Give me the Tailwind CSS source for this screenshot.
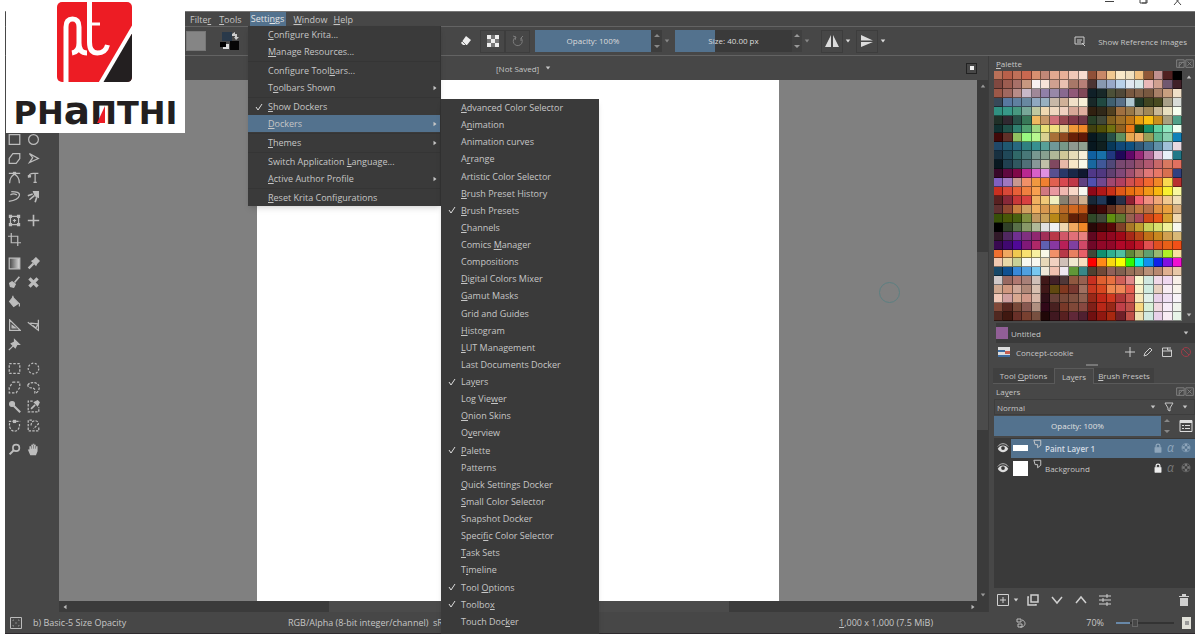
<!DOCTYPE html>
<html lang="en">
<head>
<meta charset="utf-8">
<title>Krita</title>
<script src="https://cdn.jsdelivr.net/npm/@tailwindcss/browser@4"></script>
</head>
<body class="relative flex h-screen flex-col overflow-hidden bg-white pr-[5px] pl-[5px] font-['Open_Sans','Noto_Sans',sans-serif] text-[9px] leading-[17px] text-[#c6c6c6]">

<svg class="absolute h-0 w-0">
  <defs><linearGradient id="lg"><stop stop-color="#444"/><stop offset="1" stop-color="#ddd"/></linearGradient></defs>
  <symbol id="rect" viewBox="0 0 16 16"><path d="M1.500 2h13v12h-13z"/></symbol>
  <symbol id="ellipse" viewBox="0 0 16 16"><circle cx="8" cy="8" r="6"/></symbol>
  <symbol id="polygon" viewBox="0 0 16 16"><path d="M6 2h8.500v6l-4.500 6H1.500V8z"/></symbol>
  <symbol id="polyline" viewBox="0 0 16 16"><path d="M3 2l11 6-11 5 4-6z"/></symbol>
  <symbol id="bezier" viewBox="0 0 16 16"><path d="M1 3h14M2 15c0-5 2-9 6-11M14 15c0-5-2-9-6-11"/><path d="M6 1h4v4H6z" fill="currentColor" stroke="none"/></symbol>
  <symbol id="freepath" viewBox="0 0 16 16"><path d="M2 8c0-4 3-5 6-5h6M10 3v11M8 14h4"/><path d="M1 5h4v3H1z" fill="currentColor" stroke="none"/></symbol>
  <symbol id="dyna" viewBox="0 0 16 16"><path d="M4 2c6 0 11 1 10 5-1 4-6 6-13 7M3 6c3-2 6-1 8 0"/></symbol>
  <symbol id="multibrush" viewBox="0 0 16 16"><path d="M1 7l6-2M3 12l6-5M10 15l2-6" stroke-width="2"/><path d="M8 2h6v7l-4-2z" fill="currentColor"/></symbol>
  <symbol id="transform" viewBox="0 0 16 16"><path d="M3 3h10v10H3zM8 6v4M6 8h4"/><path d="M1 1h4v4H1zM11 1h4v4h-4zM1 11h4v4H1zM11 11h4v4h-4z" fill="currentColor" stroke="none"/></symbol>
  <symbol id="move" viewBox="0 0 16 16"><path d="M8 1v14M1 8h14" stroke-width="2"/></symbol>
  <symbol id="crop" viewBox="0 0 16 16"><path d="M4 0v12h12M0 4h12v12"/></symbol>
  <symbol id="gradient" viewBox="0 0 16 16"><path d="M1.500 1.500h13v13h-13z" fill="url(#lg)"/></symbol>
  <symbol id="picker" viewBox="0 0 16 16"><path d="M2 14l6-6" stroke-width="3"/><path d="M6 5l5 5 1-2 3-3-4-4-3 3z" fill="currentColor"/></symbol>
  <symbol id="colorize" viewBox="0 0 16 16"><path d="M8 8l6-7" stroke-width="2"/><path d="M2 9l3-2 4 3-2 4-4-1z" fill="currentColor"/></symbol>
  <symbol id="patch" viewBox="0 0 16 16"><path d="M3 3l10 10M13 3L3 13" stroke-width="4"/></symbol>
  <symbol id="fill" viewBox="0 0 16 16"><path d="M6 3l7 7-6 4-5-6z" fill="currentColor"/><path d="M6 1v6M14 10v4"/></symbol>
  <symbol id="assist" viewBox="0 0 16 16"><path d="M2 1v13h13zM5 8v3h4z"/></symbol>
  <symbol id="measure" viewBox="0 0 16 16"><path d="M1 4l13 10V1M4 5l10 1M7 8l4 3 2-4"/></symbol>
  <symbol id="pin" viewBox="0 0 16 16"><path d="M1 15l6-6"/><path d="M8 2l6 6-3 0-2 4-5-5 4-2z" fill="currentColor"/></symbol>
  <symbol id="selrect" viewBox="0 0 16 16"><path d="M1.500 2h13v12h-13z" stroke-dasharray="3 2"/></symbol>
  <symbol id="selell" viewBox="0 0 16 16"><circle cx="8" cy="8" r="6.500" stroke-dasharray="2.500 2"/></symbol>
  <symbol id="selpoly" viewBox="0 0 16 16"><path d="M6 1.500h8.500V8L10 14.500H1.500V8z" stroke-dasharray="3 2"/></symbol>
  <symbol id="sellasso" viewBox="0 0 16 16"><path d="M1 5c3-5 14-4 14 3 0 5-4 7-5 7s1-5-2-6-7 0-7-4z" stroke-dasharray="3 1.500"/></symbol>
  <symbol id="wand" viewBox="0 0 16 16"><path d="M7 7l8 8" stroke-width="2.500"/><circle cx="5" cy="5" r="3" fill="currentColor"/></symbol>
  <symbol id="selsim" viewBox="0 0 16 16"><path d="M7 1.500H1.500v13h13V9" stroke-dasharray="3 1.500"/><path d="M5 11l5-5" stroke-width="2"/><path d="M9 3l4 4 2-4-2-2z" fill="currentColor"/></symbol>
  <symbol id="selbez" viewBox="0 0 16 16"><path d="M1 3h14M2 5c-1 6 2 10 6 10s7-4 6-10" stroke-dasharray="3 1.500"/><path d="M6 1h4v4H6z" fill="currentColor" stroke="none"/></symbol>
  <symbol id="selmag" viewBox="0 0 16 16"><path d="M6 1.500H1.500v13h13V9M5 8c0-8 9-7 9-2L8 12" stroke-dasharray="3 1.500"/></symbol>
  <symbol id="zoomer" viewBox="0 0 16 16"><circle cx="10" cy="6" r="4" stroke-width="2"/><path d="M7 9l-5 5" stroke-width="2.500"/></symbol>
  <symbol id="hand" viewBox="0 0 16 16"><path d="M4 15L1 8h2V4h2V2h2V1h2v1h2v2h2v6l-2 5z" fill="currentColor" stroke="none"/><path d="M5.500 3v4M8 2v5M10.500 3v4" stroke="#777" stroke-width="1"/></symbol>
  <symbol id="eye" viewBox="0 0 16 16"><path d="M1 9c3-6 11-6 14 0-3 6-11 6-14 0z" fill="#ddd" stroke="none"/><circle cx="8" cy="8" r="2.500" fill="#333" stroke="none"/><path d="M1 6C5 1 11 1 15 6"/></symbol>
  <symbol id="lock" viewBox="0 0 16 16"><path d="M3 7h10v8H3z" fill="currentColor"/><path d="M5 7V4c0-3 6-3 6 0v3" stroke-width="2"/></symbol>
  <symbol id="checker" viewBox="0 0 16 16"><path d="M6 1h4v4H6zM2 5h4v4H2zM10 5h4v4h-4zM6 9h4v4H6z" fill="currentColor" stroke="none"/><circle cx="8" cy="7.500" r="6.500"/></symbol>
  <symbol id="layer" viewBox="0 0 16 16"><path d="M3 2h11v8l-5 4V9H5z" stroke-width="1.500"/></symbol>
  <symbol id="floatclose" viewBox="0 0 22 12"><path d="M1 1h9v9H1zM4 4h6M4 4v6M4 8l4-4M12 1h9v9h-9zM14 3l5 5M19 3l-5 5"/></symbol>
  <symbol id="tri" viewBox="0 0 8 8"><path d="M1 2h6L4 6z" fill="currentColor" stroke="none"/></symbol>
  <symbol id="spin" viewBox="0 0 8 20"><path d="M1 6l3-3 3 3zM1 14h6l-3 3z" fill="currentColor" stroke="none"/></symbol>
</svg>

<header class="flex h-[11px] shrink-0 items-start justify-end bg-white">
  <div class="flex gap-[24px] pr-3 text-[#444]" aria-label="Window controls">
    <button aria-label="Minimize"><svg class="block h-2 w-2.5" viewBox="0 0 10 8"><path d="M0 1.500h9" stroke="currentColor"/></svg></button>
    <button aria-label="Restore"><svg class="block h-2 w-2.5" viewBox="0 0 10 8" fill="none" stroke="currentColor"><path d="M1-2h6v5H1zM3 3h5v-5"/></svg></button>
    <button aria-label="Close"><svg class="block h-2 w-2.5" viewBox="0 0 10 8" fill="none" stroke="currentColor"><path d="M1 5l7-8M8 5L1-3"/></svg></button>
  </div>
</header>

<nav class="flex h-[15px] shrink-0 items-center border-t border-[#777] bg-[#474747] pl-[181px]">
  <button class="px-1">Filte<u>r</u></button>
  <button class="px-1"><u>T</u>ools</button>
  <button class="ml-1 h-[14px] w-[36px] bg-[#53728e] leading-[14px] text-[#e4e4e4]">Setti<u>n</u>gs</button>
  <button class="ml-1 px-1"><u>W</u>indow</button>
  <button class="px-0.5"><u>H</u>elp</button>
</nav>

<div class="flex h-[30px] shrink-0 items-center border-y border-[#636363] bg-[#474747] pl-[181px]">
  <button class="h-5 w-5 border border-[#777] bg-[#858585]" aria-label="Pattern"></button>
  <button class="ml-3 h-5 w-6" aria-label="Foreground and background colours"><svg class="h-5 w-6" viewBox="0 0 24 20"><path d="M4 1h10v9H4z" fill="#29394a"/><path d="M12 10h9v9h-9z" fill="#060606"/><path d="M5 13h6v5H5z" fill="#ddd"/><path d="M2 11h6v5H2z" fill="#000"/><path d="M14 3l3-2v2h2v3h2l-3 3-2-3h1V5h-3z" fill="#ccc"/></svg></button>
  <span class="w-[212px]"></span>
  <div class="flex h-[24px] items-center text-[#dcdcdc]">
    <button class="flex h-[23px] w-[24px] items-center justify-center" aria-label="Eraser"><svg class="h-3 w-3" viewBox="0 0 12 12"><path d="M6 1l5 4-4 5H3L1 8z" fill="#eee"/><path d="M2 6l4 4" stroke="#777"/></svg></button>
    <button class="ml-0.5 flex h-[23px] w-[25px] items-center justify-center border border-[#3d3d3d]" aria-label="Preserve alpha"><svg class="h-3 w-3" viewBox="0 0 12 12"><path d="M0 0h12v12H0z" fill="#eee"/><path d="M4 0h4v4H4zM0 4h4v4H0zM8 4h4v4H8zM4 8h4v4H4z" fill="#777"/></svg></button>
    <button class="flex h-[23px] w-[25px] items-center justify-center border border-[#3d3d3d] text-[#7c7c7c]" aria-label="Reload preset"><svg class="h-3 w-3" viewBox="0 0 12 12" fill="none" stroke="currentColor"><path d="M4 2a4.500 4.500 0 1 0 5 1M1 1l3 1-1 3M11 1L9 3v3"/></svg></button>
    <div class="relative ml-[5px] h-[22px] w-[116px]">
      <input id="op" type="range" value="100" class="block h-full w-full appearance-none bg-[#53728e] [&::-webkit-slider-thumb]:appearance-none">
      <label for="op" class="absolute inset-0 text-center text-[8px] leading-[22px]">Opacity: 100%</label>
    </div>
    <button class="h-[22px] w-[11px] bg-[#3d3d3d] text-[#888]" aria-label="Step opacity"><svg class="mx-auto h-5 w-2"><use href="#spin"/></svg></button>
    <svg class="mx-0.5 h-1.5 w-1.5 text-[#888]"><use href="#tri"/></svg>
    <div class="relative ml-[3px] h-[22px] w-[117px]">
      <input id="sz" type="range" value="34" class="block h-full w-full appearance-none bg-linear-to-r from-[#53728e] from-34% to-[#3a3a3a] to-34% [&::-webkit-slider-thumb]:appearance-none">
      <label for="sz" class="absolute inset-0 text-center text-[8px] leading-[22px]">Size: 40.00 px</label>
    </div>
    <button class="h-[22px] w-[10px] bg-[#404040] text-[#999]" aria-label="Step size"><svg class="mx-auto h-5 w-2"><use href="#spin"/></svg></button>
    <svg class="mx-[2px] h-1.5 w-1.5 text-[#888]"><use href="#tri"/></svg>
    <button class="ml-[9px] flex h-[23px] w-[22px] items-center justify-center border border-[#3d3d3d]" aria-label="Mirror horizontally"><svg class="h-3 w-3.5" viewBox="0 0 14 12"><path d="M0 12L6 0v12zM8 0l6 12H8z" fill="currentColor"/></svg></button>
    <svg class="mx-[2px] h-1.5 w-1.5"><use href="#tri"/></svg>
    <button class="ml-[3px] flex h-[23px] w-[22px] items-center justify-center border border-[#3d3d3d]" aria-label="Mirror vertically"><svg class="h-3 w-3.5" viewBox="0 0 14 12"><path d="M1 0l12 5.500H1zM1 7h12L1 12z" fill="currentColor"/></svg></button>
    <svg class="mx-[2px] h-1.5 w-1.5"><use href="#tri"/></svg>
  </div>
  <button class="ml-auto flex items-center gap-2 pr-2 text-[8px]">
    <svg class="mr-1 h-3 w-3" viewBox="0 0 12 12" fill="none" stroke="#ccc"><path d="M1 2h9v7H1zM3 5h5M3 7h4M8 8l3 3"/></svg>
    Show Reference Images
  </button>
</div>

<main class="flex min-h-0 flex-1 bg-[#474747]">
  <div class="flex min-w-0 flex-1 flex-col">
    <div class="flex h-[24px] shrink-0 items-center pr-[11px]">
      <button class="ml-[491px] flex items-center gap-1.5 text-[8px]">[Not Saved] <svg class="h-1.5 w-1.5"><use href="#tri"/></svg></button>
      <button class="ml-auto flex h-[11px] w-[11px] items-center justify-center border border-[#222]" aria-label="Close document"><span class="h-1 w-1 bg-[#eee]"></span></button>
    </div>
    <div class="flex min-h-0 flex-1">
      <aside id="tools" class="flex w-[54px] shrink-0 flex-col gap-[5px] pt-[50px] text-[#bdbdbd]" aria-label="Toolbox"></aside>
      <section class="flex min-w-0 flex-1 flex-col">
        <div class="flex min-h-0 flex-1">
          <div class="relative flex flex-1 bg-[#808080] pl-[198px]">
            <div class="h-full w-[522px] bg-white"></div>
            <div class="absolute top-[202px] left-[820px] h-[21px] w-[21px] rounded-full border border-[#5c7f80]"></div>
          </div>
          <div class="flex w-[11px] shrink-0 flex-col items-center bg-[#3b3b3b] text-[#999]">
            <svg class="h-3 w-1.5 rotate-180" viewBox="0 0 8 8"><use href="#tri"/></svg>
            <div class="h-[160px] shrink-0"></div>
            <div class="h-[178px] w-full shrink-0 bg-[#4b4b4b]"></div>
            <svg class="mt-auto h-3 w-1.5" viewBox="0 0 8 8"><use href="#tri"/></svg>
          </div>
        </div>
        <div class="flex h-[11px] shrink-0 items-center bg-[#3b3b3b] pr-3 text-[#bbb]">
          <svg class="mx-[3px] h-1.5 w-1.5 rotate-90"><use href="#tri"/></svg>
          <div class="ml-[258px] h-full w-[400px] bg-[#4b4b4b]"></div>
          <svg class="ml-auto h-1.5 w-1.5 -rotate-90"><use href="#tri"/></svg>
        </div>
      </section>
    </div>
  </div>

  <aside class="flex w-[207px] shrink-0 flex-col border-l border-[#3c3c3c]">
    <div class="flex h-[15px] shrink-0 items-center justify-between pl-[7px] text-[8px]"><h2><u>P</u>alette</h2><svg class="h-2.5 w-5 text-[#8a8a8a]" fill="none" stroke="currentColor"><use href="#floatclose"/></svg></div>
    <div class="flex h-[250px] shrink-0 pl-[5px]">
      <div id="palette" class="grid flex-1 grid-cols-20"></div>
      <div class="flex w-[13px] flex-col items-center justify-between text-[#bbb]"><svg class="h-3 w-1.5 rotate-180" viewBox="0 0 8 8"><use href="#tri"/></svg><svg class="h-3 w-1.5" viewBox="0 0 8 8"><use href="#tri"/></svg></div>
    </div>
    <div class="mt-0.5 ml-[7px] flex h-[20px] shrink-0 items-center bg-[#3a3a3a] pr-1.5 text-[8px]"><span class="h-3 w-3 bg-[#915f96]"></span><select aria-label="Swatch name" class="ml-[3px] flex-1 appearance-none"><option>Untitled</option></select><svg class="h-1.5 w-1.5"><use href="#tri"/></svg></div>
    <div class="flex h-[18px] shrink-0 items-center pl-[9px] text-[8px]">
      <svg class="h-2.5 w-3" viewBox="0 0 12 10"><path d="M0 0h12v10H0z" fill="#ddd"/><path d="M0 3h7v2H0zM0 8h12v2H0z" fill="#3e6ca0"/><path d="M7 4h5v3H7z" fill="#c75e50"/></svg>
      <button class="ml-[6px]">Concept-cookie</button>
      <div class="ml-auto flex text-[#ccc]">
        <button class="flex h-4 w-[18px] items-center justify-center" aria-label="Add swatch"><svg class="h-2.5 w-2.5" viewBox="0 0 10 10"><path d="M5 0v10M0 5h10" stroke="currentColor"/></svg></button>
        <button class="flex h-4 w-[18px] items-center justify-center" aria-label="Edit swatch"><svg class="h-2.5 w-2.5" viewBox="0 0 10 10" fill="none" stroke="currentColor"><path d="M1 9l1-3 5-5 2 2-5 5z"/></svg></button>
        <button class="flex h-4 w-[20px] items-center justify-center" aria-label="Save palette"><svg class="h-2.5 w-2.5" viewBox="0 0 10 10" fill="none" stroke="currentColor"><path d="M.5 1h5v2h4v6.500h-9z"/><path d="M5 1h4M1 4h8"/></svg></button>
        <button class="flex h-4 w-[18px] items-center justify-center" aria-label="Delete swatch"><svg class="h-2.5 w-2.5" viewBox="0 0 10 10" fill="none" stroke="#9c3c48"><circle cx="5" cy="5" r="4.500"/><path d="M2 2l6 6"/></svg></button>
      </div>
    </div>
    <div class="flex h-[7px] shrink-0 items-center justify-center"><span class="h-0.5 w-3 bg-[#777]"></span></div>
    <div class="ml-1 flex h-[16px] shrink-0 text-[8px] leading-[15px]" role="tablist">
      <button role="tab" class="w-[61px] border-b border-[#5a5a5a] bg-[#404040]">Tool <u>O</u>ptions</button>
      <button role="tab" class="w-[40px] border-x border-t border-[#5a5a5a]">La<u>y</u>ers</button>
      <button role="tab" class="w-[60px] border-b border-[#5a5a5a] bg-[#404040]"><u>B</u>rush Presets</button>
      <span class="flex-1 border-b border-[#5a5a5a]"></span>
    </div>
    <div class="flex h-[15px] shrink-0 items-center justify-between pl-[7px] text-[8px]"><h2>La<u>y</u>ers</h2><svg class="h-2.5 w-5 text-[#8a8a8a]" fill="none" stroke="currentColor"><use href="#floatclose"/></svg></div>
    <div class="ml-[5px] flex h-[16px] shrink-0 items-center border border-[#3d3d3d] pr-1.5 text-[8px]"><select aria-label="Blending mode" class="ml-0.5 flex-1 appearance-none"><option>Normal</option></select><svg class="mr-2 h-1.5 w-1.5"><use href="#tri"/></svg><button class="flex items-center gap-2" aria-label="Filter layers"><svg class="h-2.5 w-2.5" viewBox="0 0 10 10" fill="none" stroke="currentColor"><path d="M1 1h8L6 6v3L4 8V6z"/></svg><svg class="h-1.5 w-1.5"><use href="#tri"/></svg></button></div>
    <div class="mt-px ml-[5px] flex h-[20px] shrink-0 items-center text-[8px]">
      <div class="relative h-full flex-1"><input id="lop" type="range" value="100" class="block h-full w-full appearance-none bg-[#53728e] [&::-webkit-slider-thumb]:appearance-none"><label for="lop" class="absolute inset-0 text-center leading-[20px] text-[#e0e0e0]">Opacity: 100%</label></div>
      <button class="h-full w-[11px] text-[#888]" aria-label="Step layer opacity"><svg class="mx-auto h-5 w-2"><use href="#spin"/></svg></button>
      <button class="ml-1 flex h-[18px] w-[19px] items-center justify-center" aria-label="View options"><svg class="h-3.5 w-3.5" viewBox="0 0 14 14" fill="none" stroke="#ddd"><path d="M1 1.500h12v11H1z"/><path d="M1 3h12" stroke-width="2"/><path d="M3 6.500h2M6 6.500h5M3 9.500h2M6 9.500h5"/></svg></button>
    </div>
    <ul class="mt-0.5 ml-[5px] flex min-h-0 flex-1 flex-col bg-[#3a3a3a] text-[8px]">
      <li class="flex h-[20px] items-center font-semibold"><button class="flex w-[17px] justify-center" aria-label="Toggle Paint Layer 1"><svg class="h-3 w-3" fill="none" stroke="#ddd"><use href="#eye"/></svg></button><div class="flex h-[19px] flex-1 items-center bg-[#53728e] pl-0.5"><span class="h-[6px] w-[15px] bg-white"></span><svg class="mb-2 ml-1 h-2.5 w-2.5" fill="none" stroke="#ccc"><use href="#layer"/></svg><span class="ml-[3px] flex-1 text-[#d4dce4]">Paint Layer 1</span><div class="flex gap-1 pr-1 text-[#8fa6bb]"><svg class="h-2.5 w-2.5" fill="none" stroke="currentColor"><use href="#lock"/></svg><i class="w-2.5 text-[12px] leading-[10px] font-normal">α</i><svg class="h-2.5 w-2.5" fill="none" stroke="currentColor"><use href="#checker"/></svg></div></div></li>
      <li class="flex h-[20px] items-center"><button class="flex w-[17px] justify-center" aria-label="Toggle Background"><svg class="h-3 w-3" fill="none" stroke="#ddd"><use href="#eye"/></svg></button><div class="flex h-[19px] flex-1 items-center pl-0.5"><span class="h-[15px] w-[15px] bg-white"></span><svg class="mb-2 ml-1 h-2.5 w-2.5" fill="none" stroke="#ccc"><use href="#layer"/></svg><span class="ml-[3px] flex-1">Background</span><div class="flex gap-1 pr-1 text-[#777]"><svg class="h-2.5 w-2.5 text-[#eee]" fill="none" stroke="currentColor"><use href="#lock"/></svg><i class="w-2.5 text-[12px] leading-[10px]">α</i><svg class="h-2.5 w-2.5" fill="none" stroke="currentColor"><use href="#checker"/></svg></div></div></li>
    </ul>
    <div class="flex h-[24px] shrink-0 items-center pr-1.5 pl-2 text-[#d0d0d0]">
      <button class="flex items-center gap-1" aria-label="Add layer"><svg class="h-3 w-3" viewBox="0 0 12 12" fill="none" stroke="currentColor"><path d="M.5 .5h11v11H.5zM6 3v6M3 6h6"/></svg><svg class="h-1.5 w-1.5"><use href="#tri"/></svg></button>
      <button class="ml-2" aria-label="Duplicate layer"><svg class="h-3 w-3" viewBox="0 0 12 12" fill="none" stroke="currentColor" stroke-width="1.500"><path d="M4 1h7v7H4zM2 3H1v8h8v-1"/></svg></button>
      <button class="ml-3" aria-label="Move down"><svg class="h-3 w-3" viewBox="0 0 12 12" fill="none" stroke="currentColor" stroke-width="1.500"><path d="M1 3l5 6 5-6"/></svg></button>
      <button class="ml-3" aria-label="Move up"><svg class="h-3 w-3" viewBox="0 0 12 12" fill="none" stroke="currentColor" stroke-width="1.500"><path d="M1 9l5-6 5 6"/></svg></button>
      <button class="ml-3" aria-label="Layer properties"><svg class="h-3 w-3" viewBox="0 0 12 12" fill="none" stroke="currentColor"><path d="M0 2h12M0 6h12M0 10h12M8 0v4M4 4v4M8 8v4"/></svg></button>
      <button class="ml-auto" aria-label="Delete layer"><svg class="h-3 w-2.5" viewBox="0 0 10 12"><path d="M0 2h3V0h4v2h3v1H0zM1 4h8v8H1z" fill="currentColor"/></svg></button>
    </div>
  </aside>
</main>

<footer class="flex h-[22px] shrink-0 items-center border-b border-[#2e2a2e] bg-[#474747] pl-[5px]">
  <svg class="h-3 w-3" viewBox="0 0 12 12" fill="none" stroke="#bbb"><path d="M.5 .5h11v11H.5z"/><path d="M3 4V3h1M8 3h1v1M3 8v1h1M8 9h1V8M5 6h2" stroke="#888"/></svg>
  <span class="ml-[11px] w-[255px]">b) Basic-5 Size Opacity</span>
  <span class="w-[551px] whitespace-nowrap">RGB/Alpha (8-bit integer/channel)&nbsp; sRGB</span>
  <button><u>1</u>,000 x 1,000 (7.5 MiB)</button>
  <div class="ml-auto flex items-center pr-1">
    <svg class="h-2.5 w-2.5" viewBox="0 0 10 10" fill="none" stroke="#bbb"><path d="M1 1h4v3H1zM6 2c4 1 4 6 0 7H4M2 6v3h4V6z"/></svg>
    <label for="zoom" class="ml-[60px]">70%</label>
    <input id="zoom" type="range" value="30" class="ml-[12px] h-0.5 w-[58px] appearance-none bg-linear-to-r from-[#6888a8] from-25% to-[#333] to-25% [&::-webkit-slider-thumb]:h-2 [&::-webkit-slider-thumb]:w-1.5 [&::-webkit-slider-thumb]:appearance-none [&::-webkit-slider-thumb]:border [&::-webkit-slider-thumb]:border-[#666] [&::-webkit-slider-thumb]:bg-[#474747]">
    <button class="ml-2 flex h-3 w-[9px] items-center justify-center bg-[#e0e0d8]" aria-label="Fit page"><span class="h-1 w-1 bg-[#999]"></span></button>
  </div>
</footer>

<div id="settings" role="menu" class="absolute top-[26px] left-[248px] w-[193px] border-r border-[#333] bg-[#3a3a3a] shadow-md"></div>
<div id="dockers" role="menu" class="absolute top-[99px] bottom-0 left-[441px] flex w-[158px] flex-col bg-[#3a3a3a] pb-1 shadow-md"></div>

<div class="absolute top-0 left-[6px] h-[133px] w-[179px] bg-white">
  <svg class="ml-[51px] h-[82px] w-[75px]" viewBox="0 0 75 82" fill="none">
    <rect y="2" width="75" height="80" rx="5" fill="#ed1c24"/>
    <path d="M75 33v44q0 5-5 5H44z" fill="#231f20"/>
    <path d="M77 26L43 84" stroke="#fff" stroke-width="4"/>
    <path d="M9 82V27q0-8 6.500-8t6.500 8v16q0 10 8 10M22 43q0 9-7 10" stroke="#fff" stroke-width="5"/>
    <path d="M32.500 0v42q0 11 8 11t10-8" stroke="#fff" stroke-width="5"/>
    <path d="M32 24h11" stroke="#fff" stroke-width="3"/>
  </svg>
  <div class="relative mt-[11px] flex h-[36px] items-baseline justify-center font-['DejaVu_Sans'] text-[32px] leading-[36px] font-bold text-[#231f20]">PH<span class="text-[39px]">a</span>ПTHI
    <svg class="absolute top-[13px] left-[91px] h-[17px] w-[8px]" viewBox="0 0 8 17"><path d="M8 0v17H0z" fill="#ed1c24"/></svg>
  </div>
</div>

<script>
const icon = n => `<button class="flex h-[19px] w-[19px] items-center justify-center" aria-label="${n}"><svg class="h-[13px] w-[13px]" fill="none" stroke="currentColor" stroke-width="1.5"><use href="#${n}"/></svg></button>`;
const groups = ['rect ellipse polygon polyline bezier freepath dyna multibrush', 'transform move crop', 'gradient picker colorize patch fill', 'assist measure pin', 'selrect selell selpoly sellasso wand selsim selbez selmag', 'zoomer hand'];
document.getElementById('tools').innerHTML = groups.map(g => `<div class="grid grid-cols-[19px_19px]">${g.split(' ').map(icon).join('')}</div>`).join('');

/* An underscore precedes each mnemonic letter; "*" marks a ticked entry, ">" a submenu. */
const mnemonic = s => s.replace(/_(.)/, '<u>$1</u>');
const arrow = '<svg class="ml-auto h-1.5 w-1.5 -rotate-90"><use href="#tri"/></svg>';
const tick = '<svg class="h-2 w-2" viewBox="0 0 8 8" fill="none" stroke="#ddd"><path d="M1 4l2 3 4-6"/></svg>';
const item = (t, cls) => {
  const on = t[0] === '*', sub = t.endsWith('>');
  return `<button role="menuitem" class="${cls}"><span class="w-[13px]">${on ? tick : ''}</span><span>${mnemonic(t.replace(/[*>]/g, ''))}</span>${sub ? arrow : ''}</button>`;
};
document.getElementById('settings').innerHTML = ['_Configure Krita...', '_Manage Resources...', '-', 'Configure Tool_bars...', 'T_oolbars Shown>', '-', '*_Show Dockers', '_Dockers>', '-', '_Themes>', '-', 'Switch Application _Language...', '_Active Author Profile>', '-', '_Reset Krita Configurations']
  .map(t => t === '-' ? '<div class="h-0.5 border-b border-[#353535]"></div>' : item(t, t === '_Dockers>' ? 'flex h-[17px] w-full items-center bg-[#53728e] pl-[7px] pr-0.5' : 'flex h-[17px] w-full items-center pl-[7px] pr-0.5')).join('');
document.getElementById('dockers').innerHTML = ['_Advanced Color Selector', 'A_nimation', 'Animation curves', 'A_rrange', 'Artistic Color Selector', '_Brush Preset History', '*_Brush Presets', '_Channels', 'Comics _Manager', 'Compositions', '_Digital Colors Mixer', '_Gamut Masks', 'Grid and Guides', '_Histogram', '_LUT Management', 'Last Documents Docker', '*La_yers', 'Log Vie_wer', '_Onion Skins', 'O_verview', '*_Palette', 'Patterns', '_Quick Settings Docker', '_Small Color Selector', 'Snapshot Docker', 'Speci_fic Color Selector', '_Task Sets', 'T_imeline', '*Tool _Options', '*Toolbo_x', 'Touch Doc_ker']
  .map(t => item(t, 'flex min-h-0 flex-1 items-center pl-[7px]')).join('');

const swatches = `
b87058 b8604a c07058 c86850 d89070 c08878 e0a890 e8b098 f0c8b8 f8dcd0 905038 c88868 f0c890 f8e8c8 f0e0c0 f0c080 905838 c09090 502020 000000
804840 9c5c50 a87068 c89880 f8f0f0 f8e4d8 d0a090 e8c0b0 a87868 b88078 4c3434 8898b0 98a8c8 b8d0e8 e0e8f0 d8e8e8 e8b8b8 d0a090 705870 402028
9c5848 a06860 b88c88 c8b8c8 a08898 9080a8 9888a8 886890 905878 804858 102028 182828 4c5038 504838 785840 806048 785840 a88068 c8a080 f0e0c8
384858 5878a0 6080a0 6888a0 90a8c0 98b0c0 c8b8a8 d0b098 f0e0c8 f8f0d8 182828 204840 406070 587088 b0c8d0 203828 404420 484a20 a8a088 d8dcd8
309080 389888 489880 78a898 c0c8a0 f0d8b0 f0d8c0 f0d0c0 d8a898 e0b0a0 302010 302818 504020 a07040 987848 b09870 a08858 c8b898 e8e0c0 f8fff0
203028 302830 285048 387858 f0b860 c89868 d07078 984850 803848 703848 284028 404838 806020 a07028 c07818 e8a010 f8c010 c89020 a8a080 50a088
103030 205048 308070 50a070 a0d880 e8e078 f0e080 e8d090 f09838 f08828 404010 505008 707010 906020 e87818 184818 189068 60d0a0 90e8c0 f0fff0
400808 603028 90c060 98f880 b8f890 d8d090 a87038 904820 682008 601808 081820 102828 285048 609060 e8a850 f0b068 98a058 60b890 88d0b0 1080b8
204868 205870 286880 308080 389090 58a098 709898 789888 909890 90a090 081820 102020 083858 104878 105080 305878 407090 6090a8 a0c0d8 e8d8e0
183040 204858 306868 487878 789890 88a090 b0b898 d0c898 e8dcb8 f8f0d8 1060a0 1870a8 203880 200858 600868 982878 b06898 e0c0d8 e8f0f8 207888
081820 204050 305860 507078 889898 c0c0a8 804860 e8b8a8 f8e8c8 f8f8e8 1868a0 405898 504878 784870 804870 985068 b05870 c86868 d87860 e07060
380828 600840 800848 b82890 d860c8 e090e0 585090 283868 182848 101830 503888 503880 604070 804878 a05070 c06870 e07878 e87868 d87050 304080
8060c0 a078c0 c89890 f09068 f09840 f08030 e06050 d84850 c03848 604080 5050b0 704890 a04870 b04060 d05050 e05038 f06830 f08828 f8d850 b83030
c83020 d84838 e86038 f08040 f8a050 d07880 e898a0 f0b8b0 f8d8c8 f8f8f0 900818 b01818 c83018 e05818 e87010 f07818 f09818 f8b810 f8f030 f8f8a0
582020 882838 c83838 d84040 f0b060 f0c878 f0f0c0 888070 b08878 d0b090 182838 203858 000818 283048 902030 f06070 f09080 f0a878 f0c890 f0e0b8
603030 904830 c88040 d0a060 f0b060 d89850 e0a048 b86828 d06820 c05818 280808 400808 603020 885030 a06840 c07840 b87048 e09040 e8a040 d8b080
385008 485808 486010 809040 c09860 c8a058 b88818 a06018 602008 702808 304828 404838 609010 607830 986050 a84858 d04818 e85818 d8a030 f0d8b0
000000 304028 587048 889868 b0b898 e0e0e0 f0f0f0 f0d8b0 f0a860 f08828 280808 400808 580808 804028 a87828 c0a030 c8d058 d8e070 f0f098 f8f8f0
301828 502860 703090 803080 902870 a03058 b83848 d05868 e07078 e88080 600820 880818 900820 a00818 a82818 b84818 c07018 c88820 d0a050 d8b878
380850 400870 500898 801878 b02868 6060b0 8838a0 b82058 8040a0 d04868 700828 900828 900828 b00828 a80820 c01828 e05050 e05020 e86018 f05018
f07030 f0a860 f0c850 f8e070 f8f0a0 f8f8e8 f09068 b83848 e88060 e86068 404838 109070 30b090 50c0a0 608838 90a058 60a070 98b870 b0f028 f8e0a0
f0c8b0 e8d8a8 c8d098 f8f8f0 f8f8f0 e8d8b8 f0d0c0 d0c0b8 f0e8d0 f8e0c0 ff0000 ff8818 f8d810 f8ff00 30f808 10f0e0 1090f0 1020e8 8010e0 f010d0
184868 105090 3888d8 50a0e0 78c8f0 f0e8d8 f0c0b0 f0e8f0 609838 388888 504030 704838 906058 806050 987058 a07860 b89078 b88870 e0b090 e8c8a8
d0c8c8 986860 b07870 a88078 d0c0b8 401818 402028 503838 905840 986050 c83020 e06030 e87040 d06058 e08888 f8f8d0 d0e8e0 f0d8e8 f0d8f0 f8f0e8
d0a890 d09880 d0a898 b08878 d8c0b0 401818 604810 803820 783830 a07060 c83820 d84820 f08850 f08858 e86050 f8f0c8 d0ece0 e8d0c0 f8ecf4 f8f4ec
f0c8b8 d0a0a0 d8a890 d09888 d8b8a8 301018 684038 784838 805040 906050 982818 c02818 d03820 b03838 d05850 f8e8b8 e0f0e8 e8d0e8 f0e0f4 f8f4f8
804838 582820 784838 885850 b09080 300818 482020 783828 804838 884840 802018 b82818 982818 c04048 c05048 f8d880 d8f0d8 f0d8e0 f8ecf8 f0f4ec
502820 401810 683028 784030 785040 200808 401820 582020 602838 502030 701010 901810 a82810 702028 c05048 f0e0b0 d0e8e0 e8d0e8 f8ecf4 e8f4e8`;
document.getElementById('palette').innerHTML = swatches.trim().split(/\s+/).map(c => `<span class="border-r border-b border-black/45" style="background:#${c}"></span>`).join('');
</script>
</body>
</html>
